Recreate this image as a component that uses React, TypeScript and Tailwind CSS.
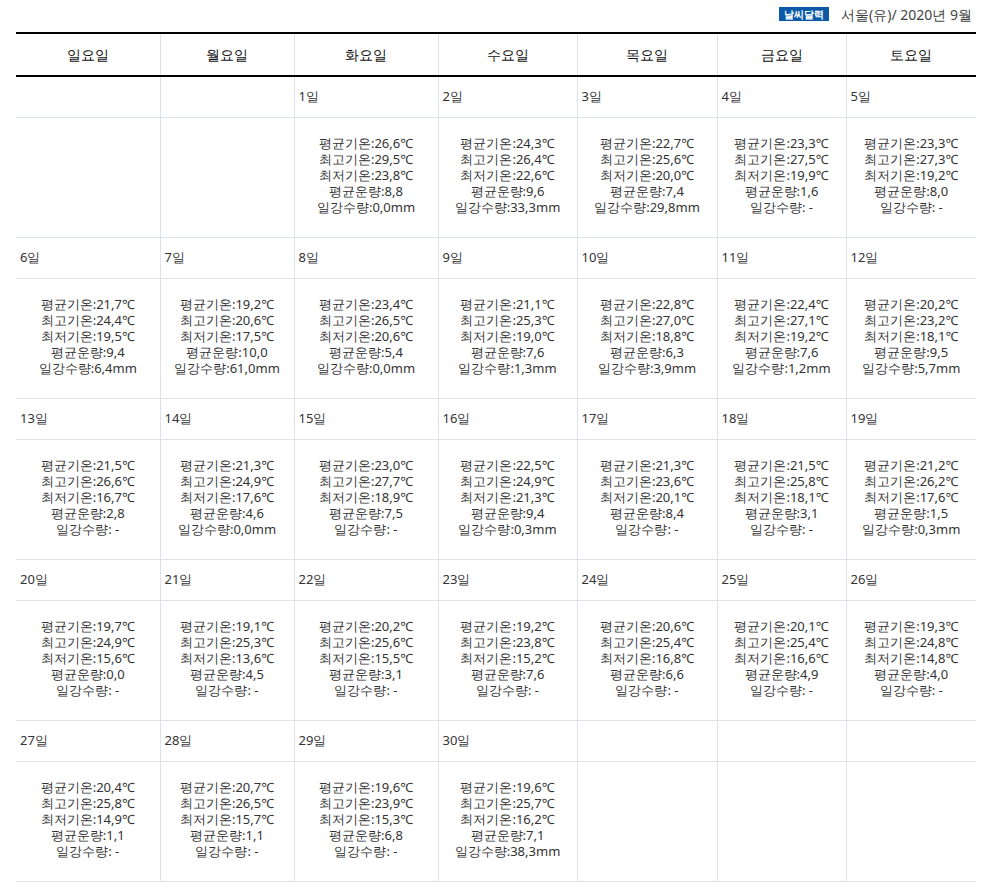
type D = [number, string, string, string, string, string];

const data: D[] = [
  [1, "26.6", "29.5", "23.8", "8.8", "0.0mm"],
  [2, "24.3", "26.4", "22.6", "9.6", "33.3mm"],
  [3, "22.7", "25.6", "20.0", "7.4", "29.8mm"],
  [4, "23.3", "27.5", "19.9", "1.6", " -"],
  [5, "23.3", "27.3", "19.2", "8.0", " -"],
  [6, "21.7", "24.4", "19.5", "9.4", "6.4mm"],
  [7, "19.2", "20.6", "17.5", "10.0", "61.0mm"],
  [8, "23.4", "26.5", "20.6", "5.4", "0.0mm"],
  [9, "21.1", "25.3", "19.0", "7.6", "1.3mm"],
  [10, "22.8", "27.0", "18.8", "6.3", "3.9mm"],
  [11, "22.4", "27.1", "19.2", "7.6", "1.2mm"],
  [12, "20.2", "23.2", "18.1", "9.5", "5.7mm"],
  [13, "21.5", "26.6", "16.7", "2.8", " -"],
  [14, "21.3", "24.9", "17.6", "4.6", "0.0mm"],
  [15, "23.0", "27.7", "18.9", "7.5", " -"],
  [16, "22.5", "24.9", "21.3", "9.4", "0.3mm"],
  [17, "21.3", "23.6", "20.1", "8.4", " -"],
  [18, "21.5", "25.8", "18.1", "3.1", " -"],
  [19, "21.2", "26.2", "17.6", "1.5", "0.3mm"],
  [20, "19.7", "24.9", "15.6", "0.0", " -"],
  [21, "19.1", "25.3", "13.6", "4.5", " -"],
  [22, "20.2", "25.6", "15.5", "3.1", " -"],
  [23, "19.2", "23.8", "15.2", "7.6", " -"],
  [24, "20.6", "25.4", "16.8", "6.6", " -"],
  [25, "20.1", "25.4", "16.6", "4.9", " -"],
  [26, "19.3", "24.8", "14.8", "4.0", " -"],
  [27, "20.4", "25.8", "14.9", "1.1", " -"],
  [28, "20.7", "26.5", "15.7", "1.1", " -"],
  [29, "19.6", "23.9", "15.3", "6.8", " -"],
  [30, "19.6", "25.7", "16.2", "7.1", "38.3mm"],
];

const days = ["일요일", "월요일", "화요일", "수요일", "목요일", "금요일", "토요일"];
const widths = ["w-[144px]", "w-[134px]", "w-[144px]", "w-[139px]", "w-[140px]", "w-[129px]", "w-[130px]"];

const cells: (D | null)[] = [null, null, ...data, null, null, null];
const weeks: (D | null)[][] = [];
for (let i = 0; i < cells.length; i += 7) weeks.push(cells.slice(i, i + 7));

const c = (v: string) => v.replace(".", ",");

export default function App() {
  return (
    <div className="w-[998px] h-[890px] bg-white text-[#333] font-['Noto_Sans_CJK_KR',sans-serif] text-[13px] pl-4 pr-[22px]">
      <div className="flex justify-end items-center h-8 gap-3 pr-1 pb-1">
        <span className="bg-[#0a5aa8] text-white text-[10px] font-bold px-[5px] leading-[14px]">날씨달력</span>
        <span className="text-[14px] text-[#444]">서울(유)/ 2020년 9월</span>
      </div>
      <table className="w-[960px] border-collapse table-fixed">
        <thead>
          <tr className="h-[43px] border-t-2 border-b-2 border-t-black border-b-black">
            {days.map((d, i) => (
              <th key={d} className={`${widths[i]} font-normal text-[14px] text-[#111] ${i > 0 ? "border-l border-[#dde3ec]" : ""}`}>{d}</th>
            ))}
          </tr>
        </thead>
        <tbody>
          {weeks.map((w, wi) => (
            <>
              <tr key={`d${wi}`} className="h-[41px] border-b border-[#dde3ec]">
                {w.map((x, i) => (
                  <td key={i} className={`pl-1 ${i > 0 ? "border-l border-[#dde3ec]" : ""}`}>{x ? `${x[0]}일` : ""}</td>
                ))}
              </tr>
              <tr key={`v${wi}`} className="h-[120px] border-b border-[#dde3ec]">
                {w.map((x, i) => (
                  <td key={i} className={`align-top pt-[17px] text-center leading-4 ${i > 0 ? "border-l border-[#dde3ec]" : ""}`}>
                    {x && (
                      <div>
                        <div>평균기온:{c(x[1])}℃</div>
                        <div>최고기온:{c(x[2])}℃</div>
                        <div>최저기온:{c(x[3])}℃</div>
                        <div>평균운량:{c(x[4])}</div>
                        <div>일강수량:{c(x[5])}</div>
                      </div>
                    )}
                  </td>
                ))}
              </tr>
            </>
          ))}
        </tbody>
      </table>
    </div>
  );
}
